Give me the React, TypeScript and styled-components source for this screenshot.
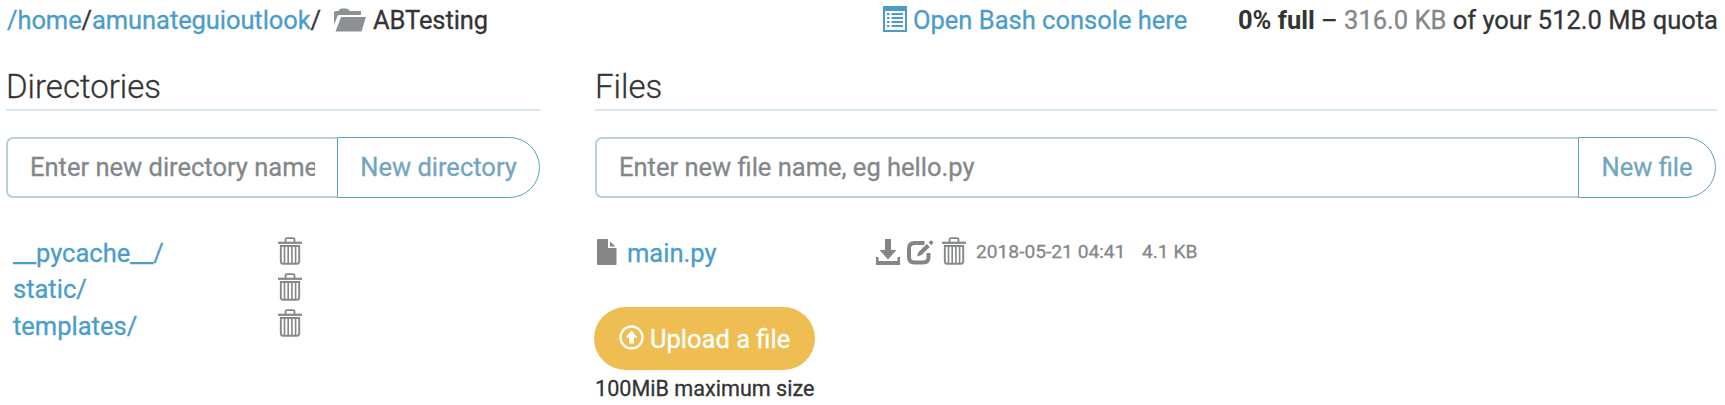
import React from "react";
import styled, { createGlobalStyle } from "styled-components";

const blue = "#4b9dc9";
const ink = "#333436";
const grey = "#828889";

const GlobalStyle = createGlobalStyle`
  * { box-sizing: border-box; }
  body {
    margin: 0;
    background: #fff;
    color: ${ink};
    font-family: Roboto, "Liberation Sans", sans-serif;
    font-size: 25.5px;
    line-height: 36.4px;
    -webkit-text-stroke-width: 0.3px;
  }
`;

const Page = styled.main`
  width: 1725px;
  height: 405px;
  padding: 2px 7px 0 6px;
  overflow: hidden;
`;

const TopBar = styled.header`
  display: flex;
  align-items: center;
  height: 36px;
  padding-left: 1px;
  white-space: nowrap;
`;

const Breadcrumb = styled.nav`
  display: flex;
  align-items: center;
  width: 876px;
  letter-spacing: -0.08px;
`;

const Link = styled.a`
  color: ${blue};
  text-decoration: none;
`;

const Separator = styled.span`
  margin-right: 13px;
`;

const Icon = styled.svg<{ $gap?: number; $lift?: number }>`
  display: block;
  flex: none;
  margin-right: ${(p) => p.$gap ?? 0}px;
  margin-bottom: ${(p) => p.$lift ?? 0}px;
`;

const ConsoleLink = styled(Link)`
  display: flex;
  align-items: center;
  width: 355px;
`;

const Quota = styled.div`
  b { -webkit-text-stroke-width: 0; }
`;

const Muted = styled.span`
  color: ${grey};
`;

const Columns = styled.div`
  display: grid;
  grid-template-columns: 534px 1122px;
  column-gap: 55px;
  margin-top: 26px;
`;

const Column = styled.section`
  min-width: 0;
`;

const Heading = styled.h2`
  height: 47px;
  margin: 0 0 26px;
  border-bottom: 2px solid #d9e7ea;
  font-size: 33px;
  font-weight: 300;
  line-height: 46px;
`;

const InputGroup = styled.form<{ $inset?: number }>`
  display: flex;
  height: 61px;
  margin-right: ${(p) => p.$inset ?? 0}px;
`;

const NameInput = styled.input`
  flex: 1;
  min-width: 0;
  padding: 0 22px;
  border: 2px solid #b9d0d8;
  border-right: 0;
  border-radius: 7px 0 0 7px;
  background: #fff;
  color: ${ink};
  font: inherit;
  &::placeholder { color: ${grey}; opacity: 1; }
`;

const CreateButton = styled.button<{ $width: number }>`
  width: ${(p) => p.$width}px;
  padding: 0;
  border: 1.5px solid #5b9fc2;
  border-radius: 0 31px 31px 0;
  background: #fff;
  color: #73a5c0;
  font: inherit;
  white-space: nowrap;
`;

const DirectoryList = styled.ul`
  margin: 37px 0 0;
  padding: 0 0 0 7px;
  list-style: none;
`;

const DirectoryRow = styled.li`
  display: grid;
  grid-template-columns: 265px 24px;
  align-items: center;
  height: 36.4px;
`;

const FileRow = styled.div`
  display: flex;
  align-items: center;
  height: 36.4px;
  margin-top: 37px;
  padding-left: 2px;
  white-space: nowrap;
`;

const FileName = styled(Link)`
  width: 249px;
`;

const Meta = styled.span<{ $width?: number }>`
  width: ${(p) => (p.$width ? `${p.$width}px` : "auto")};
  padding-bottom: 2px;
  color: ${grey};
  font-size: 19.2px;
`;

const UploadButton = styled.button`
  display: flex;
  align-items: center;
  width: 221px;
  height: 63px;
  margin-top: 36px;
  margin-left: -1px;
  padding: 0 0 0 25px;
  border: 0;
  border-radius: 32px;
  background: #efbe52;
  color: #fff;
  font: inherit;
  white-space: nowrap;
`;

const Caption = styled.div`
  margin-top: 1px;
  font-size: 21.6px;
`;

const FolderOpenIcon = () => (
  <Icon width="32" height="24" viewBox="0 0 32 24" fill="#8c9294" $gap={7}>
    <path d="M0 17V4.500Q0 3 2 3H4.500Q5.500.5 7.500.5h5q2 0 3 2.500H27v4H5.500Q4 7 3.500 8Z" />
    <path d="M7 9h25L27.500 23.500H1.500Z" />
  </Icon>
);

const ListIcon = () => (
  <Icon width="24" height="26" viewBox="0 0 24 26" fill={blue} $gap={6} $lift={3}>
    <path fillRule="evenodd" d="M0 0h24v26H0ZM2 5v19h20V5Z" />
    <path d="M4 7h2.500v2H4zM8.500 7H20v2H8.500zM4 11h2.500v2H4zM8.500 11H20v2H8.500zM4 15h2.500v2H4zM8.500 15H20v2H8.500zM4 19h2.500v2H4zM8.500 19H20v2H8.500z" />
  </Icon>
);

const TrashIcon = ({ gap = 0 }: { gap?: number }) => (
  <Icon width="24" height="28" viewBox="0 0 24 28" fill="none" stroke="#858889" $gap={gap} $lift={5}>
    <path d="M7.500 5V2.500Q7.500 1.200 9 1.200h6q1.500 0 1.500 1.300V5" strokeWidth="1.800" />
    <path d="M0 5.800h24" strokeWidth="2.200" />
    <path d="M2.800 9h18.400v15.500q0 2.200-2.200 2.200H5q-2.200 0-2.200-2.200Z" strokeWidth="1.900" />
    <path d="M6.500 9v17M10.200 9v17M13.900 9v17M17.600 9v17" strokeWidth="1.600" />
  </Icon>
);

const FileIcon = () => (
  <Icon width="20" height="26" viewBox="0 0 20 26" fill="#858585" $gap={10} $lift={3}>
    <path d="M0 .8Q0 0 .8 0H11v9h8.500v16.200q0 .8-.8.8H.8Q0 26 0 25.200Z" />
    <path d="M13 2.500 18.500 7.500H13Z" />
  </Icon>
);

const DownloadIcon = () => (
  <Icon width="24" height="26" viewBox="0 0 24 26" fill="#858585" $gap={7} $lift={3}>
    <path d="M9 0h6v11h5.500L12 20.500 3.500 11H9Z" />
    <path d="M0 18h2.500v4h19v-4H24v8H0Z" />
  </Icon>
);

const EditIcon = () => (
  <Icon width="27" height="26" viewBox="0 0 27 26" $gap={8} $lift={3}>
    <path
      d="M17.500 4H7.500Q2 4 2 9.500V18q0 5.500 5.500 5.500H16q5.500 0 5.500-5.500v-4"
      fill="none"
      stroke="#858585"
      strokeWidth="4"
    />
    <path d="M10 17.500 11.500 13 19.800 5l3 3L14.500 16ZM21.500 3.500 23.500 1.800q1.200-.8 2.200.4 1 1.300 0 2.300L24.300 6.200Z" fill="#858585" />
  </Icon>
);

const UploadIcon = () => (
  <Icon width="25" height="25" viewBox="0 0 25 25" $gap={6} $lift={3}>
    <circle cx="12.500" cy="12.500" r="11" fill="none" stroke="#fff" strokeWidth="2.300" />
    <path d="M12.500 5.500 18.500 12.500H15V18.500h-5v-6H6.500Z" fill="#fff" />
  </Icon>
);

const directories = ["__pycache__/", "static/", "templates/"];

export default function App() {
  return (
    <>
      <GlobalStyle />
      <Page>
        <TopBar>
          <Breadcrumb>
            <Link href="#">/home</Link>/<Link href="#">amunateguioutlook</Link>
            <Separator>/</Separator>
            <FolderOpenIcon />
            <span>ABTesting</span>
          </Breadcrumb>
          <ConsoleLink href="#">
            <ListIcon />
            Open Bash console here
          </ConsoleLink>
          <Quota>
            <b>0% full</b> – <Muted>316.0 KB</Muted> of your 512.0 MB quota
          </Quota>
        </TopBar>
        <Columns>
          <Column>
            <Heading>Directories</Heading>
            <InputGroup>
              <NameInput placeholder="Enter new directory name" />
              <CreateButton type="button" $width={203}>New directory</CreateButton>
            </InputGroup>
            <DirectoryList>
              {directories.map((name) => (
                <DirectoryRow key={name}>
                  <Link href="#">{name}</Link>
                  <TrashIcon />
                </DirectoryRow>
              ))}
            </DirectoryList>
          </Column>
          <Column>
            <Heading>Files</Heading>
            <InputGroup $inset={1}>
              <NameInput placeholder="Enter new file name, eg hello.py" />
              <CreateButton type="button" $width={138}>New file</CreateButton>
            </InputGroup>
            <FileRow>
              <FileIcon />
              <FileName href="#">main.py</FileName>
              <DownloadIcon />
              <EditIcon />
              <TrashIcon gap={10} />
              <Meta $width={166}>2018-05-21 04:41</Meta>
              <Meta>4.1 KB</Meta>
            </FileRow>
            <UploadButton type="button">
              <UploadIcon />
              Upload a file
            </UploadButton>
            <Caption>100MiB maximum size</Caption>
          </Column>
        </Columns>
      </Page>
    </>
  );
}
